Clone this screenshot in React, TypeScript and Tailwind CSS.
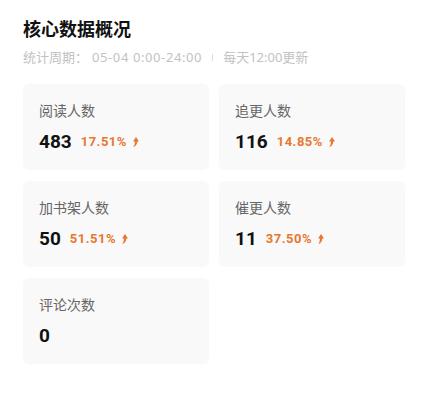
import React from "react";

const Arrow = () => (
  <svg width="7" height="10" viewBox="0 0 7 10" className="ml-[5px]">
    <path d="M4 0 L7 4.4 L5.3 4.4 C5.3 7 4.1 8.9 1.2 10 C2.5 8.4 3 6.7 2.9 4.4 L1 4.4 Z" fill="#e8772e" />
  </svg>
);

type Item = { label: string; value: string; pct?: string };

const items: Item[] = [
  { label: "阅读人数", value: "483", pct: "17.51%" },
  { label: "追更人数", value: "116", pct: "14.85%" },
  { label: "加书架人数", value: "50", pct: "51.51%" },
  { label: "催更人数", value: "11", pct: "37.50%" },
  { label: "评论次数", value: "0" },
];

export default function App() {
  return (
    <div
      className="w-[428px] h-[400px] bg-white px-[23px] pt-[16px]"
      style={{ fontFamily: '"Noto Sans", "Noto Sans CJK SC", sans-serif' }}
    >
      <div className="text-[18px] leading-[26px] font-bold text-[#111]">核心数据概况</div>
      <div className="mt-[5px] flex items-center text-[13px] leading-[20px] text-[#c2c2c2]">
        <span>统计周期：</span>
        <span className="ml-[4px] tracking-[0.6px]">05-04 0:00-24:00</span>
        <span className="mx-[10px] w-px h-[7px] bg-[#dcdcdc]" />
        <span>每天12:00更新</span>
      </div>
      <div className="mt-[17px] grid grid-cols-2 gap-x-[10px] gap-y-[11px]">
        {items.map((it) => (
          <div key={it.label} className="h-[86px] rounded-[6px] bg-[#f9f9f9] px-[16px] pt-[17px]">
            <div className="text-[14px] leading-[20px] text-[#666]">{it.label}</div>
            <div className="mt-[9px] flex items-center h-[24px]">
              <span
                className="text-[19px] leading-[24px] font-bold text-[#111]"
                style={{ fontFamily: "Roboto, sans-serif" }}
              >
                {it.value}
              </span>
              {it.pct && (
                <>
                  <span
                    className="ml-[9px] text-[13px] font-bold tracking-[0.5px] text-[#e8772e]"
                    style={{ fontFamily: "Roboto, sans-serif" }}
                  >
                    {it.pct}
                  </span>
                  <Arrow />
                </>
              )}
            </div>
          </div>
        ))}
      </div>
    </div>
  );
}
